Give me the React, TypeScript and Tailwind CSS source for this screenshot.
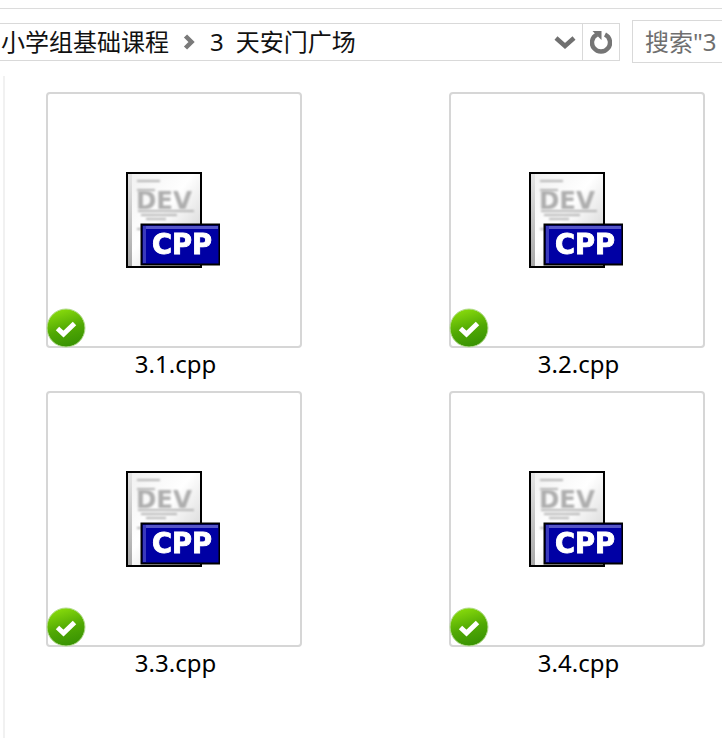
const files = ['3.1.cpp', '3.2.cpp', '3.3.cpp', '3.4.cpp'];

function CppIcon() {
  return (
    <svg width="94" height="96" viewBox="0 0 94 96" className="block">
      <defs>
        <linearGradient id="page" x1="0" y1="0" x2="1" y2="1">
          <stop offset="0" stopColor="#f0f0f0" />
          <stop offset="0.45" stopColor="#ffffff" />
          <stop offset="0.75" stopColor="#e0e0e0" />
          <stop offset="1" stopColor="#a0a0a0" />
        </linearGradient>
        <linearGradient id="edge" x1="0" y1="0" x2="0" y2="1">
          <stop offset="0" stopColor="#e4e4e4" />
          <stop offset="1" stopColor="#a8a8a8" />
        </linearGradient>
        <filter id="soft" x="-20%" y="-20%" width="140%" height="140%">
          <feGaussianBlur stdDeviation="1" />
        </filter>
        <filter id="softer" x="-10%" y="-10%" width="120%" height="120%">
          <feGaussianBlur stdDeviation="1" />
        </filter>
        <filter id="crisp" x="-5%" y="-5%" width="110%" height="110%">
          <feGaussianBlur stdDeviation="0.4" />
        </filter>
      </defs>
      <rect x="1" y="1" width="74" height="94" fill="url(#page)" stroke="#000" strokeWidth="2" />
      <rect x="2" y="2" width="4" height="92" fill="url(#edge)" />
      <g filter="url(#soft)" fill="#b4b4b4">
        <rect x="11" y="8" width="23" height="2" />
        <rect x="11" y="17" width="18" height="2" />
        <rect x="12" y="38" width="56" height="2" />
        <rect x="15" y="42" width="36" height="2" />
        <rect x="20" y="46" width="20" height="2" />
        <rect x="11" y="56" width="4" height="2" />
      </g>
      <text x="10" y="37" fontFamily="DejaVu Sans, sans-serif" fontWeight="700" fontSize="24" textLength="56" lengthAdjust="spacingAndGlyphs" fill="#aeaeae" filter="url(#softer)">DEV</text>
      <rect x="15.5" y="52.5" width="78" height="40" fill="#0000a4" stroke="#000" strokeWidth="2" />
      <path d="M17 54h75v3H17z" fill="#5656c8" />
      <path d="M17 54h3v37h-3z" fill="#3a3abc" />
      <text x="26" y="82" fontFamily="DejaVu Sans, sans-serif" fontWeight="700" fontSize="28" textLength="60" lengthAdjust="spacingAndGlyphs" fill="#fff" stroke="#fff" strokeWidth="0.9" filter="url(#crisp)">CPP</text>
    </svg>
  );
}

function SyncBadge() {
  return (
    <svg width="40" height="40" viewBox="0 0 40 40" className="block">
      <defs>
        <linearGradient id="green" x1="0.3" y1="0" x2="0.6" y2="1">
          <stop offset="0" stopColor="#8adc0c" />
          <stop offset="0.55" stopColor="#50a804" />
          <stop offset="1" stopColor="#389203" />
        </linearGradient>
      </defs>
      <circle cx="20" cy="20" r="19" fill="url(#green)" stroke="#b6dc93" strokeWidth="1" />
      <path d="M11.5 20.5l6 5.5 11-10.5" fill="none" stroke="#fff" strokeWidth="5" />
    </svg>
  );
}

function FileCard({ name }: { name: string }) {
  return (
    <div className="w-[256px]">
      <div className="relative flex h-[256px] items-center justify-center rounded-[4px] border-2 border-[#d6d6d6] bg-white">
        <div className="mb-[1px] mr-[2px]">
          <CppIcon />
        </div>
        <div className="absolute left-[-2px] top-[214px]">
          <SyncBadge />
        </div>
      </div>
      <div className="-mt-[1px] h-[44px] pl-[3px] text-center text-[24px] leading-[33px] text-black">{name}</div>
    </div>
  );
}

export default function App() {
  return (
    <div className="h-[738px] w-[722px] overflow-hidden bg-white font-['Noto_Sans','Noto_Sans_CJK_SC',sans-serif]">
      <div className="h-[9px] border-b border-[#dcdcdc]" />
      <div className="mt-[11px] flex h-[43px] items-center">
        <div className="flex h-[38px] w-[620px] items-center border-y border-r border-[#d9d9d9] pl-[1px] text-[24px] text-[#111]">
          <span>小学组基础课程</span>
          <svg width="12" height="16" viewBox="0 0 12 16" className="ml-[14px]">
            <path d="M2.5 2l6 6-6 6" fill="none" stroke="#7a7a7a" strokeWidth="4.5" />
          </svg>
          <span className="ml-[15px]">3</span>
          <span className="ml-[12px]">天安门广场</span>
          <svg width="22" height="14" viewBox="0 0 22 14" className="ml-auto mr-[6px]">
            <path d="M2 3l9 8 9-8" fill="none" stroke="#707070" strokeWidth="4.5" />
          </svg>
          <div className="flex h-full w-[37px] items-center justify-center border-l border-[#d9d9d9]">
            <svg width="22" height="26" viewBox="0 0 22 26">
              <path d="M7 5.5a9 9 0 1 0 8 0" fill="none" stroke="#757575" strokeWidth="4.5" />
              <path d="M2.5 2h9v9z" fill="#757575" />
            </svg>
          </div>
        </div>
        <div className="ml-[12px] flex h-[43px] flex-1 items-center overflow-hidden whitespace-nowrap border-y border-l border-[#d9d9d9] pl-[12px] text-[24px] text-[#6f6f6f]">
          搜索"3
        </div>
      </div>
      <div className="mt-[13px] h-[662px] border-l-2 border-[#f1f1f1] ml-[3px] pl-[41px] pt-[16px]">
        <div className="grid grid-cols-[256px_256px] gap-x-[147px]">
          {files.map((f) => (
            <FileCard key={f} name={f} />
          ))}
        </div>
      </div>
    </div>
  );
}
